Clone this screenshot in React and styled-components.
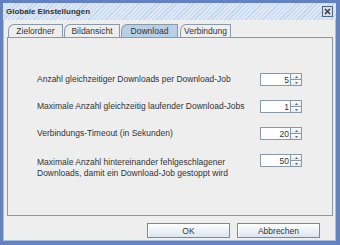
import React from 'react';
import styled, { createGlobalStyle } from 'styled-components';

const Global = createGlobalStyle`
  html, body { margin: 0; padding: 0; background: #eeeeee; }
  body { font-family: "Liberation Sans", Arial, sans-serif; font-size: 8.5px; color: #333; }
`;

const Frame = styled.div`
  width: 340px;
  height: 245px;
  box-sizing: border-box;
  border: 3px solid #6382bf;
  border-right-width: 4px;
  border-bottom-width: 4px;
  box-shadow: inset 0 0 0 1px #a9bde0;
  background: #eeeeee;
  display: flex;
  flex-direction: column;
`;

const TitleBar = styled.div`
  height: 17px;
  display: flex;
  align-items: center;
  justify-content: space-between;
  padding: 0 3px;
  background: repeating-linear-gradient(135deg, #c3d4ee 0 1px, #dce7f7 1px 3px);
`;

const Title = styled.span`
  font-weight: bold;
  font-size: 8px;
  color: #333;
`;

const CloseBtn = styled.div`
  width: 9px;
  height: 9px;
  border: 1px solid #55657f;
  background: #d3dceb;
  display: flex;
  align-items: center;
  justify-content: center;
`;

const Body = styled.div`
  flex: 1;
  display: flex;
  flex-direction: column;
  padding: 4px 3px 0 4px;
`;

const TabRow = styled.div`
  display: flex;
  padding-left: 1px;
  height: 13px;
`;

const Tab = styled.div`
  width: ${p => p.$w}px;
  height: 13px;
  margin-right: ${p => p.$gap || 1}px;
  box-sizing: border-box;
  border: 1px solid #8a99a8;
  border-bottom: none;
  border-top-left-radius: 6px 7px;
  background: ${p => (p.$active ? '#b8cfe5' : '#eeeeee')};
  line-height: 13px;
  text-align: center;
  color: #333;
`;

const Panel = styled.div`
  height: 179px;
  box-sizing: border-box;
  border: 1px solid #8a99a8;
  background: #eeeeee;
  padding: 35px 0 0 29px;
  display: flex;
  flex-direction: column;
  gap: 14px;
`;

const Row = styled.div`
  display: flex;
  align-items: ${p => (p.$top ? 'flex-start' : 'center')};
  justify-content: space-between;
  width: 265px;
  min-height: 13px;
`;

const Label = styled.div`
  line-height: 10.5px;
  color: #333;
  padding-top: ${p => (p.$top ? '3px' : '0')};
`;

const Spinner = styled.div`
  display: flex;
  width: 42px;
  height: 13px;
  box-sizing: border-box;
  border: 1px solid #8a99a8;
  background: #fff;
`;

const SpinField = styled.div`
  flex: 1;
  text-align: right;
  padding-right: 1px;
  line-height: 12px;
  color: #333;
`;

const SpinArrows = styled.div`
  width: 10px;
  display: flex;
  flex-direction: column;
  border-left: 1px solid #8a99a8;
`;

const Arrow = styled.div`
  flex: 1;
  background: linear-gradient(#fdfdfd, #e3e9f0);
  border-top: ${p => (p.$down ? '1px solid #8a99a8' : 'none')};
  display: flex;
  align-items: center;
  justify-content: center;
`;

const Footer = styled.div`
  display: flex;
  justify-content: flex-end;
  gap: 7px;
  padding: 7px 13px 0 0;
`;

const Button = styled.div`
  width: 83px;
  height: 15px;
  box-sizing: border-box;
  border: 1px solid #7a8a99;
  box-shadow: inset 1px 1px 0 #ffffff;
  background: linear-gradient(#ffffff, #dbe5f1);
  display: flex;
  align-items: center;
  justify-content: center;
  color: #333;
`;

const Tri = ({ down }) => (
  <svg width="3" height="2" viewBox="0 0 3 2">
    <path d={down ? 'M0 0H3L1.5 2Z' : 'M0 2H3L1.5 0Z'} fill="#666" />
  </svg>
);

const Spin = ({ value }) => (
  <Spinner>
    <SpinField>{value}</SpinField>
    <SpinArrows>
      <Arrow><Tri /></Arrow>
      <Arrow $down><Tri down /></Arrow>
    </SpinArrows>
  </Spinner>
);

export default function App() {
  return (
    <>
      <Global />
      <Frame>
        <TitleBar>
          <Title>Globale Einstellungen</Title>
          <CloseBtn>
            <svg width="7" height="7" viewBox="0 0 7 7">
              <path d="M1 1L6 6M6 1L1 6" stroke="#333" strokeWidth="1.3" />
            </svg>
          </CloseBtn>
        </TitleBar>
        <Body>
          <TabRow>
            <Tab $w={55}>Zielordner</Tab>
            <Tab $w={56} $gap={1}>Bildansicht</Tab>
            <Tab $w={57} $gap={2} $active>Download</Tab>
            <Tab $w={51}>Verbindung</Tab>
          </TabRow>
          <Panel>
            <Row>
              <Label>Anzahl gleichzeitiger Downloads per Download-Job</Label>
              <Spin value="5" />
            </Row>
            <Row>
              <Label>Maximale Anzahl gleichzeitig laufender Download-Jobs</Label>
              <Spin value="1" />
            </Row>
            <Row>
              <Label>Verbindungs-Timeout (in Sekunden)</Label>
              <Spin value="20" />
            </Row>
            <Row $top>
              <Label $top>
                Maximale Anzahl hintereinander fehlgeschlagener
                <br />
                Downloads, damit ein Download-Job gestoppt wird
              </Label>
              <Spin value="50" />
            </Row>
          </Panel>
          <Footer>
            <Button>OK</Button>
            <Button>Abbrechen</Button>
          </Footer>
        </Body>
      </Frame>
    </>
  );
}
